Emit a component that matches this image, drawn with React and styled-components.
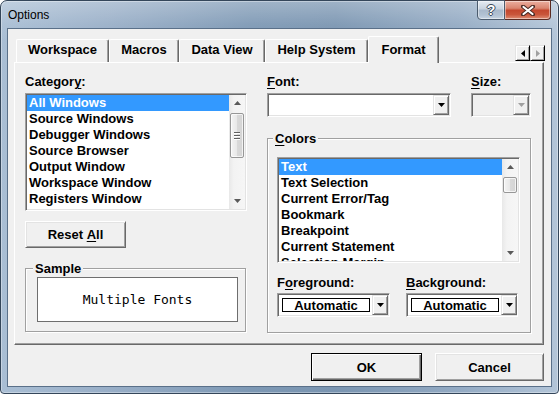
import React from "react";
import styled, { createGlobalStyle } from "styled-components";

const UI = `"Liberation Sans", Arial, sans-serif`;

const Global = createGlobalStyle`
  html, body { margin: 0; padding: 0; background: #ffffff; }
  body { width: 559px; height: 394px; overflow: hidden; font-family: ${UI}; }
  * { box-sizing: border-box; }
`;

const Window = styled.div`
  width: 559px;
  height: 394px;
  display: flex;
  flex-direction: column;
  padding: 0 6px 6px 6px;
  border: 1px solid #34465a;
  border-radius: 7px 7px 4px 4px;
  background:
    linear-gradient(180deg, rgba(255,255,255,0.28) 0px, rgba(255,255,255,0.06) 24px, rgba(255,255,255,0) 40px),
    linear-gradient(90deg, #a9bed4 0%, #98aec7 20%, #7d98b4 45%, #7a95b1 60%, #93aac3 82%, #b3c5d8 100%);
  box-shadow: inset 0 0 0 1px rgba(255,255,255,0.35);
`;

const TitleBar = styled.div`
  height: 27px;
  display: flex;
  align-items: flex-start;
  padding-left: 1px;
`;

const TitleText = styled.div`
  font: 12px ${UI};
  color: #000;
  line-height: 28px;
  flex: 1;
`;

const CaptionButtons = styled.div`
  display: flex;
  margin-top: -1px;
  margin-right: 1px;
`;

const CaptionButton = styled.div`
  width: ${(p) => (p.$close ? 46 : 28)}px;
  height: 20px;
  display: flex;
  align-items: center;
  justify-content: center;
  border: 1px solid ${(p) => (p.$close ? "#5b2b22" : "#4b5b6d")};
  border-left-width: ${(p) => (p.$close ? 0 : 1)}px;
  border-radius: ${(p) => (p.$close ? "0 0 4px 0" : "0 0 0 4px")};
  background: ${(p) =>
    p.$close
      ? "linear-gradient(180deg, #ebae9f 0%, #d98570 40%, #c4472e 52%, #c9553a 75%, #de8d73 100%)"
      : "linear-gradient(180deg, #e6ecf3 0%, #c9d4e0 42%, #a9b9cb 52%, #b2c2d3 78%, #c7d4e2 100%)"};
  box-shadow: inset 0 0 0 1px rgba(255,255,255,0.45);
`;

const HelpGlyph = styled.span`
  font: bold 14px ${UI};
  color: #fff;
  line-height: 14px;
  text-shadow: 1px 0 #3b4a5a, -1px 0 #3b4a5a, 0 1px #3b4a5a, 0 -1px #3b4a5a;
`;

const Client = styled.div`
  flex: 1;
  display: flex;
  flex-direction: column;
  background: #f0f0f0;
  border: 1px solid #5a7089;
  padding: 7px 7px 5px 6px;
`;

const TabStrip = styled.div`
  height: 26px;
  display: flex;
  align-items: flex-end;
  padding-left: 2px;
  position: relative;
  z-index: 1;
`;

const Tab = styled.div`
  width: ${(p) => p.$w}px;
  height: ${(p) => (p.$active ? 27 : 23)}px;
  margin-bottom: ${(p) => (p.$active ? -1 : 0)}px;
  display: flex;
  align-items: flex-end;
  justify-content: center;
  padding-bottom: ${(p) => (p.$active ? 6 : 5)}px;
  background: #f0f0f0;
  border-top: 1px solid #ffffff;
  border-left: 1px solid #ffffff;
  border-right: 1px solid #696969;
  border-radius: 2px 2px 0 0;
  box-shadow: inset -1px 0 0 #a0a0a0;
  font: bold 13px ${UI};
  line-height: 15px;
  color: #000;
`;

const TabScroller = styled.div`
  margin-left: auto;
  margin-right: -1px;
  align-self: flex-start;
  margin-top: 9px;
  display: flex;
`;

const SpinButton = styled.div`
  width: 15px;
  height: 16px;
  display: flex;
  align-items: center;
  justify-content: center;
  background: #f0f0f0;
  border: 1px solid;
  border-color: #e3e3e3 #000 #000 #e3e3e3;
  box-shadow: inset 1px 1px 0 #fff, inset -1px -1px 0 #a0a0a0;
`;

const TabPanel = styled.div`
  flex: 1;
  display: grid;
  grid-template-columns: 222px 264px;
  column-gap: 20px;
  align-items: start;
  padding: 11px 0 0 10px;
  background: #f0f0f0;
  border: 1px solid;
  border-color: #ffffff #696969 #696969 #ffffff;
  box-shadow: inset -1px -1px 0 #a0a0a0;
`;

const Column = styled.div`
  display: flex;
  flex-direction: column;
  align-items: flex-start;
`;

const FieldLabel = styled.div`
  font: bold 13px ${UI};
  line-height: 15px;
  height: 15px;
  color: #000;
  white-space: nowrap;
  & u { text-decoration-thickness: 1px; text-underline-offset: 2px; }
`;

const ListBox = styled.div`
  width: ${(p) => p.$w}px;
  height: ${(p) => p.$h}px;
  margin-top: ${(p) => p.$mt || 0}px;
  display: flex;
  padding: 1px;
  background: #ffffff;
  border: 1px solid;
  border-color: #a0a0a0 #ffffff #ffffff #a0a0a0;
  box-shadow: inset 1px 1px 0 #696969, inset -1px -1px 0 #e3e3e3;
`;

const ListItems = styled.div`
  flex: 1;
  overflow: hidden;
  display: flex;
  flex-direction: column;
`;

const ListItem = styled.div`
  flex: none;
  height: 16px;
  padding-left: 2px;
  font: bold 13px ${UI};
  line-height: 16px;
  white-space: nowrap;
  color: ${(p) => (p.$selected ? "#ffffff" : "#000000")};
  background: ${(p) => (p.$selected ? "#3399ff" : "transparent")};
`;

const ScrollBar = styled.div`
  width: 16px;
  display: flex;
  flex-direction: column;
  align-items: center;
  background: linear-gradient(90deg, #e8e8e8 0%, #f3f3f3 30%, #f6f6f6 100%);
`;

const ArrowCell = styled.div`
  width: 16px;
  height: 16px;
  flex: none;
  display: flex;
  align-items: center;
  justify-content: center;
`;

const Thumb = styled.div`
  width: 14px;
  height: ${(p) => p.$h}px;
  margin-top: 2px;
  flex: none;
  display: flex;
  flex-direction: column;
  align-items: center;
  justify-content: center;
  gap: 1px;
  border: 1px solid #979797;
  border-radius: 2px;
  background: linear-gradient(90deg, #f4f4f4 0%, #e8e8e8 50%, #d9d9d9 51%, #d4d4d4 100%);
  box-shadow: inset 0 0 0 1px rgba(255,255,255,0.7);
`;

const Grip = styled.div`
  width: 6px;
  height: 1px;
  background: #5f5f5f;
  box-shadow: 0 1px 0 #ffffff;
  margin-bottom: 1px;
`;

const Spacer = styled.div`
  flex: 1;
`;

const Button = styled.div`
  width: ${(p) => p.$w}px;
  height: ${(p) => p.$h || 27}px;
  margin-top: ${(p) => p.$mt || 0}px;
  display: flex;
  align-items: center;
  justify-content: center;
  font: bold 13px ${UI};
  color: #000;
  background: #f0f0f0;
  border: 1px solid;
  border-color: ${(p) => (p.$default ? "#000 #000 #000 #000" : "#ffffff #696969 #696969 #ffffff")};
  box-shadow: ${(p) =>
    p.$default
      ? "inset 1px 1px 0 #ffffff, inset -1px -1px 0 #696969, inset -2px -2px 0 #a0a0a0"
      : "inset 1px 1px 0 #e3e3e3, inset -1px -1px 0 #a0a0a0"};
  & u { text-decoration-thickness: 1px; text-underline-offset: 2px; }
`;

const GroupBox = styled.div`
  position: relative;
  width: ${(p) => p.$w}px;
  height: ${(p) => p.$h}px;
  margin-top: ${(p) => p.$mt || 0}px;
  padding: ${(p) => p.$pad};
  border: 1px solid #a0a0a0;
  box-shadow: 1px 1px 0 #ffffff, inset 1px 1px 0 #ffffff;
`;

const GroupCaption = styled.div`
  position: absolute;
  top: -8px;
  left: ${(p) => p.$left}px;
  padding: 0 2px;
  background: #f0f0f0;
  font: bold 13px ${UI};
  line-height: 15px;
  color: #000;
  & u { text-decoration-thickness: 1px; text-underline-offset: 2px; }
`;

const SampleBox = styled.div`
  width: 201px;
  height: 45px;
  display: flex;
  align-items: center;
  justify-content: center;
  background: #ffffff;
  border: 1px solid #6e6e6e;
  font: 13px "DejaVu Sans Mono", "Liberation Mono", monospace;
  color: #000;
`;

const FieldRow = styled.div`
  display: flex;
  width: 100%;
  justify-content: ${(p) => p.$justify || "flex-start"};
  gap: ${(p) => p.$gap || 0}px;
  margin-top: ${(p) => p.$mt || 0}px;
`;

const Field = styled.div`
  width: ${(p) => p.$w}px;
  display: flex;
  flex-direction: column;
`;

const Combo = styled.div`
  width: 100%;
  height: 24px;
  margin-top: ${(p) => p.$mt || 4}px;
  display: flex;
  align-items: stretch;
  padding: 1px;
  background: ${(p) => (p.$disabled ? "#f0f0f0" : "#ffffff")};
  border: 1px solid;
  border-color: #a0a0a0 #ffffff #ffffff #a0a0a0;
  box-shadow: inset 1px 1px 0 #696969, inset -1px -1px 0 #e3e3e3;
`;

const ComboValue = styled.div`
  flex: 1;
  display: flex;
  align-items: center;
  padding-left: 3px;
  padding-right: 2px;
`;

const ColorSwatch = styled.div`
  width: 88px;
  height: 14px;
  border: 1px solid #000;
  display: flex;
  justify-content: center;
  font: bold 13px ${UI};
  line-height: 13px;
  color: #000;
  background: #fff;
`;

const DropButton = styled.div`
  width: 16px;
  flex: none;
  display: flex;
  align-items: center;
  justify-content: center;
  background: #f0f0f0;
  border: 1px solid;
  border-color: #e3e3e3 #696969 #696969 #e3e3e3;
  box-shadow: inset 1px 1px 0 #ffffff, inset -1px -1px 0 #a0a0a0;
`;

const ButtonRow = styled.div`
  display: flex;
  justify-content: flex-end;
  gap: 13px;
  margin-top: 8px;
`;

const Tri = ({ dir = "down", color = "#000", w = 7, h = 4 }) => {
  const paths = {
    down: `M0 0H${w}L${w / 2} ${h}Z`,
    up: `M0 ${h}H${w}L${w / 2} 0Z`,
  };
  return (
    <svg width={w} height={h} viewBox={`0 0 ${w} ${h}`}>
      <path d={paths[dir]} fill={color} />
    </svg>
  );
};

const SideTri = ({ dir, color }) => (
  <svg width="4" height="7" viewBox="0 0 4 7">
    <path d={dir === "left" ? "M4 0V7L0 3.5Z" : "M0 0V7L4 3.5Z"} fill={color} />
  </svg>
);

const Scroll = ({ thumb, grip }) => (
  <ScrollBar>
    <ArrowCell>
      <Tri dir="up" color="#5a5a5a" />
    </ArrowCell>
    <Thumb $h={thumb}>
      {grip && (
        <>
          <Grip />
          <Grip />
          <Grip />
        </>
      )}
    </Thumb>
    <Spacer />
    <ArrowCell>
      <Tri dir="down" color="#5a5a5a" />
    </ArrowCell>
  </ScrollBar>
);

const categories = [
  "All Windows",
  "Source Windows",
  "Debugger Windows",
  "Source Browser",
  "Output Window",
  "Workspace Window",
  "Registers Window",
];

const colors = [
  "Text",
  "Text Selection",
  "Current Error/Tag",
  "Bookmark",
  "Breakpoint",
  "Current Statement",
  "Selection Margin",
];

const tabs = [
  { label: "Workspace", w: 93 },
  { label: "Macros", w: 70 },
  { label: "Data View", w: 86 },
  { label: "Help System", w: 103 },
  { label: "Format", w: 71, active: true },
];

export default function App() {
  return (
    <>
      <Global />
      <Window>
        <TitleBar>
          <TitleText>Options</TitleText>
          <CaptionButtons>
            <CaptionButton>
              <HelpGlyph>?</HelpGlyph>
            </CaptionButton>
            <CaptionButton $close>
              <svg width="14" height="11" viewBox="0 0 14 11">
                <path d="M2 1.5L12 9.5M12 1.5L2 9.5" stroke="#4a2a24" strokeWidth="4" strokeLinecap="round" />
                <path d="M2.5 2L11.5 9M11.5 2L2.5 9" stroke="#ffffff" strokeWidth="2.2" strokeLinecap="round" />
              </svg>
            </CaptionButton>
          </CaptionButtons>
        </TitleBar>
        <Client>
          <TabStrip>
            {tabs.map((t) => (
              <Tab key={t.label} $w={t.w} $active={t.active}>
                {t.label}
              </Tab>
            ))}
            <TabScroller>
              <SpinButton>
                <SideTri dir="left" color="#000" />
              </SpinButton>
              <SpinButton>
                <SideTri dir="right" color="#a0a0a0" />
              </SpinButton>
            </TabScroller>
          </TabStrip>
          <TabPanel>
            <Column>
              <FieldLabel>
                Categor<u>y</u>:
              </FieldLabel>
              <ListBox $w={222} $h={118} $mt={4}>
                <ListItems>
                  {categories.map((c, i) => (
                    <ListItem key={c} $selected={i === 0}>
                      {c}
                    </ListItem>
                  ))}
                </ListItems>
                <Scroll thumb={45} grip />
              </ListBox>
              <Button $w={101} $mt={10}>
                Reset&nbsp;<u>A</u>ll
              </Button>
              <GroupBox $w={221} $h={64} $mt={20} $pad="8px 0 0 11px">
                <GroupCaption $left={7}>Sample</GroupCaption>
                <SampleBox>Multiple Fonts</SampleBox>
              </GroupBox>
            </Column>
            <Column>
              <FieldRow $justify="space-between">
                <Field $w={184}>
                  <FieldLabel>
                    <u>F</u>ont:
                  </FieldLabel>
                  <Combo>
                    <ComboValue />
                    <DropButton>
                      <Tri dir="down" color="#000" />
                    </DropButton>
                  </Combo>
                </Field>
                <Field $w={60}>
                  <FieldLabel>
                    <u>S</u>ize:
                  </FieldLabel>
                  <Combo $disabled>
                    <ComboValue />
                    <DropButton>
                      <Tri dir="down" color="#a0a0a0" />
                    </DropButton>
                  </Combo>
                </Field>
              </FieldRow>
              <GroupBox $w={264} $h={195} $mt={21} $pad="18px 0 0 9px">
                <GroupCaption $left={5}>
                  <u>C</u>olors
                </GroupCaption>
                <ListBox $w={243} $h={106}>
                  <ListItems>
                    {colors.map((c, i) => (
                      <ListItem key={c} $selected={i === 0}>
                        {c}
                      </ListItem>
                    ))}
                  </ListItems>
                  <Scroll thumb={16} />
                </ListBox>
                <FieldRow $gap={16} $mt={12}>
                  <Field $w={113}>
                    <FieldLabel>
                      F<u>o</u>reground:
                    </FieldLabel>
                    <Combo $mt={3}>
                      <ComboValue>
                        <ColorSwatch>Automatic</ColorSwatch>
                      </ComboValue>
                      <DropButton>
                        <Tri dir="down" color="#000" />
                      </DropButton>
                    </Combo>
                  </Field>
                  <Field $w={112}>
                    <FieldLabel>
                      <u>B</u>ackground:
                    </FieldLabel>
                    <Combo $mt={3}>
                      <ComboValue>
                        <ColorSwatch>Automatic</ColorSwatch>
                      </ComboValue>
                      <DropButton>
                        <Tri dir="down" color="#000" />
                      </DropButton>
                    </Combo>
                  </Field>
                </FieldRow>
              </GroupBox>
            </Column>
          </TabPanel>
          <ButtonRow>
            <Button $w={111} $h={28} $default>
              OK
            </Button>
            <Button $w={109} $h={28}>
              Cancel
            </Button>
          </ButtonRow>
        </Client>
      </Window>
    </>
  );
}
